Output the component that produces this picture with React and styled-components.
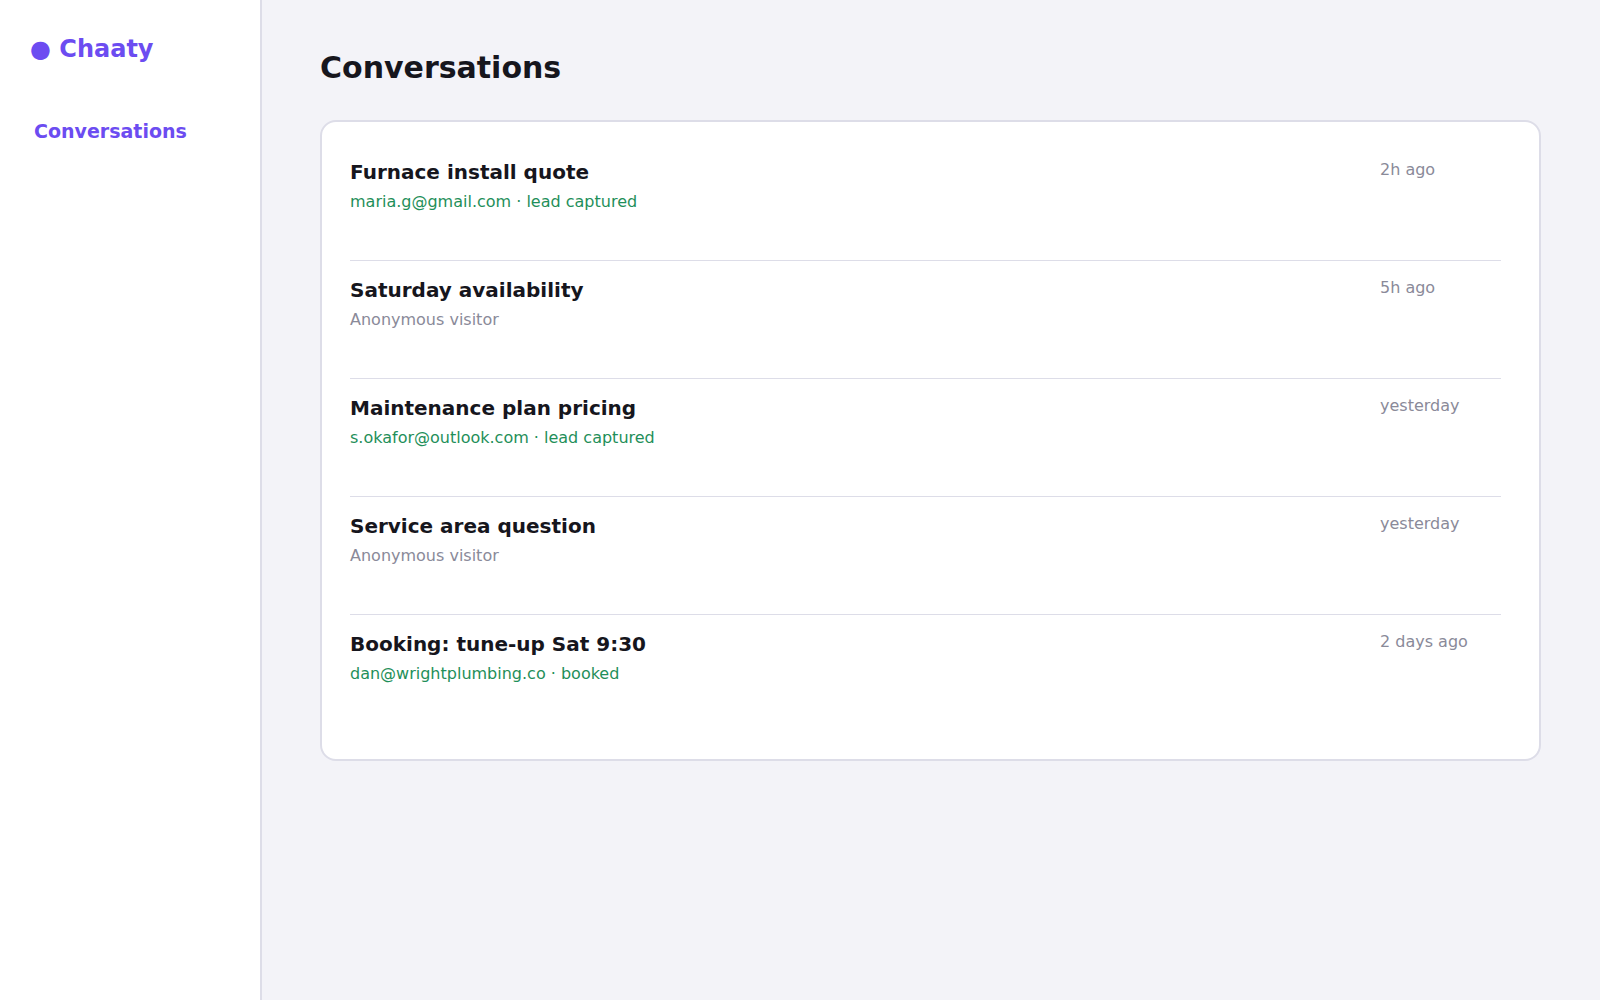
import styled, { createGlobalStyle } from "styled-components";

const conversations = [
  { title: "Furnace install quote", detail: "maria.g@gmail.com · lead captured", time: "2h ago", captured: true },
  { title: "Saturday availability", detail: "Anonymous visitor", time: "5h ago" },
  { title: "Maintenance plan pricing", detail: "s.okafor@outlook.com · lead captured", time: "yesterday", captured: true },
  { title: "Service area question", detail: "Anonymous visitor", time: "yesterday" },
  { title: "Booking: tune-up Sat 9:30", detail: "dan@wrightplumbing.co · booked", time: "2 days ago", captured: true },
];

const App = () => {
  return (
    <>
      <GlobalStyle />
      <Layout>
        <Sidebar>
          <Brand>
            <span>●</span> Chaaty
          </Brand>
          <nav>
            <NavLink href="#conversations">Conversations</NavLink>
          </nav>
        </Sidebar>
        <Main>
          <Heading id="conversations">Conversations</Heading>
          <List>
            {conversations.map(({ title, detail, time, captured }) => (
              <Row key={title}>
                <div>
                  <Title>{title}</Title>
                  <Detail $captured={captured}>{detail}</Detail>
                </div>
                <Time>{time}</Time>
              </Row>
            ))}
          </List>
        </Main>
      </Layout>
    </>
  );
};

const GlobalStyle = createGlobalStyle`
  * {
    box-sizing: border-box;
    margin: 0;
    padding: 0;
  }

  body {
    background: #f3f3f8;
    color: #16161d;
    font-family: "DejaVu Sans", sans-serif;
  }
`;

const Layout = styled.div`
  display: flex;
  min-height: 100vh;
`;

const Sidebar = styled.aside`
  flex: 0 0 262px;
  padding: 33px 30px;
  background: #ffffff;
  border-right: 2px solid #dddde8;
`;

const Brand = styled.div`
  margin-bottom: 50px;
  color: #6c4cf1;
  font-size: 24px;
  font-weight: bold;
  line-height: 32px;
`;

const NavLink = styled.a`
  display: block;
  padding: 4px;
  color: #6c4cf1;
  font-size: 19px;
  font-weight: bold;
  line-height: 24px;
  text-decoration: none;
`;

const Main = styled.main`
  flex: 1;
  padding: 48px 59px 48px 58px;
`;

const Heading = styled.h1`
  margin-bottom: 32px;
  font-size: 30px;
  line-height: 40px;
`;

const List = styled.ul`
  padding: 21px 38px 26px 28px;
  background: #ffffff;
  border: 2px solid #dddde8;
  border-radius: 16px;
  list-style: none;
`;

const Row = styled.li`
  display: flex;
  justify-content: space-between;
  min-height: 118px;
  padding-top: 15px;
  border-bottom: 1px solid #dddde8;

  &:last-child {
    border-bottom: none;
  }
`;

const Title = styled.h2`
  font-size: 20px;
  line-height: 28px;
`;

const Detail = styled.p`
  margin-top: 4px;
  color: ${({ $captured }) => ($captured ? "#1f8f5a" : "#8a8a99")};
  font-size: 16px;
  line-height: 24px;
`;

const Time = styled.time`
  flex: 0 0 121px;
  color: #8a8a99;
  font-size: 16px;
  line-height: 24px;
`;

export default App;
